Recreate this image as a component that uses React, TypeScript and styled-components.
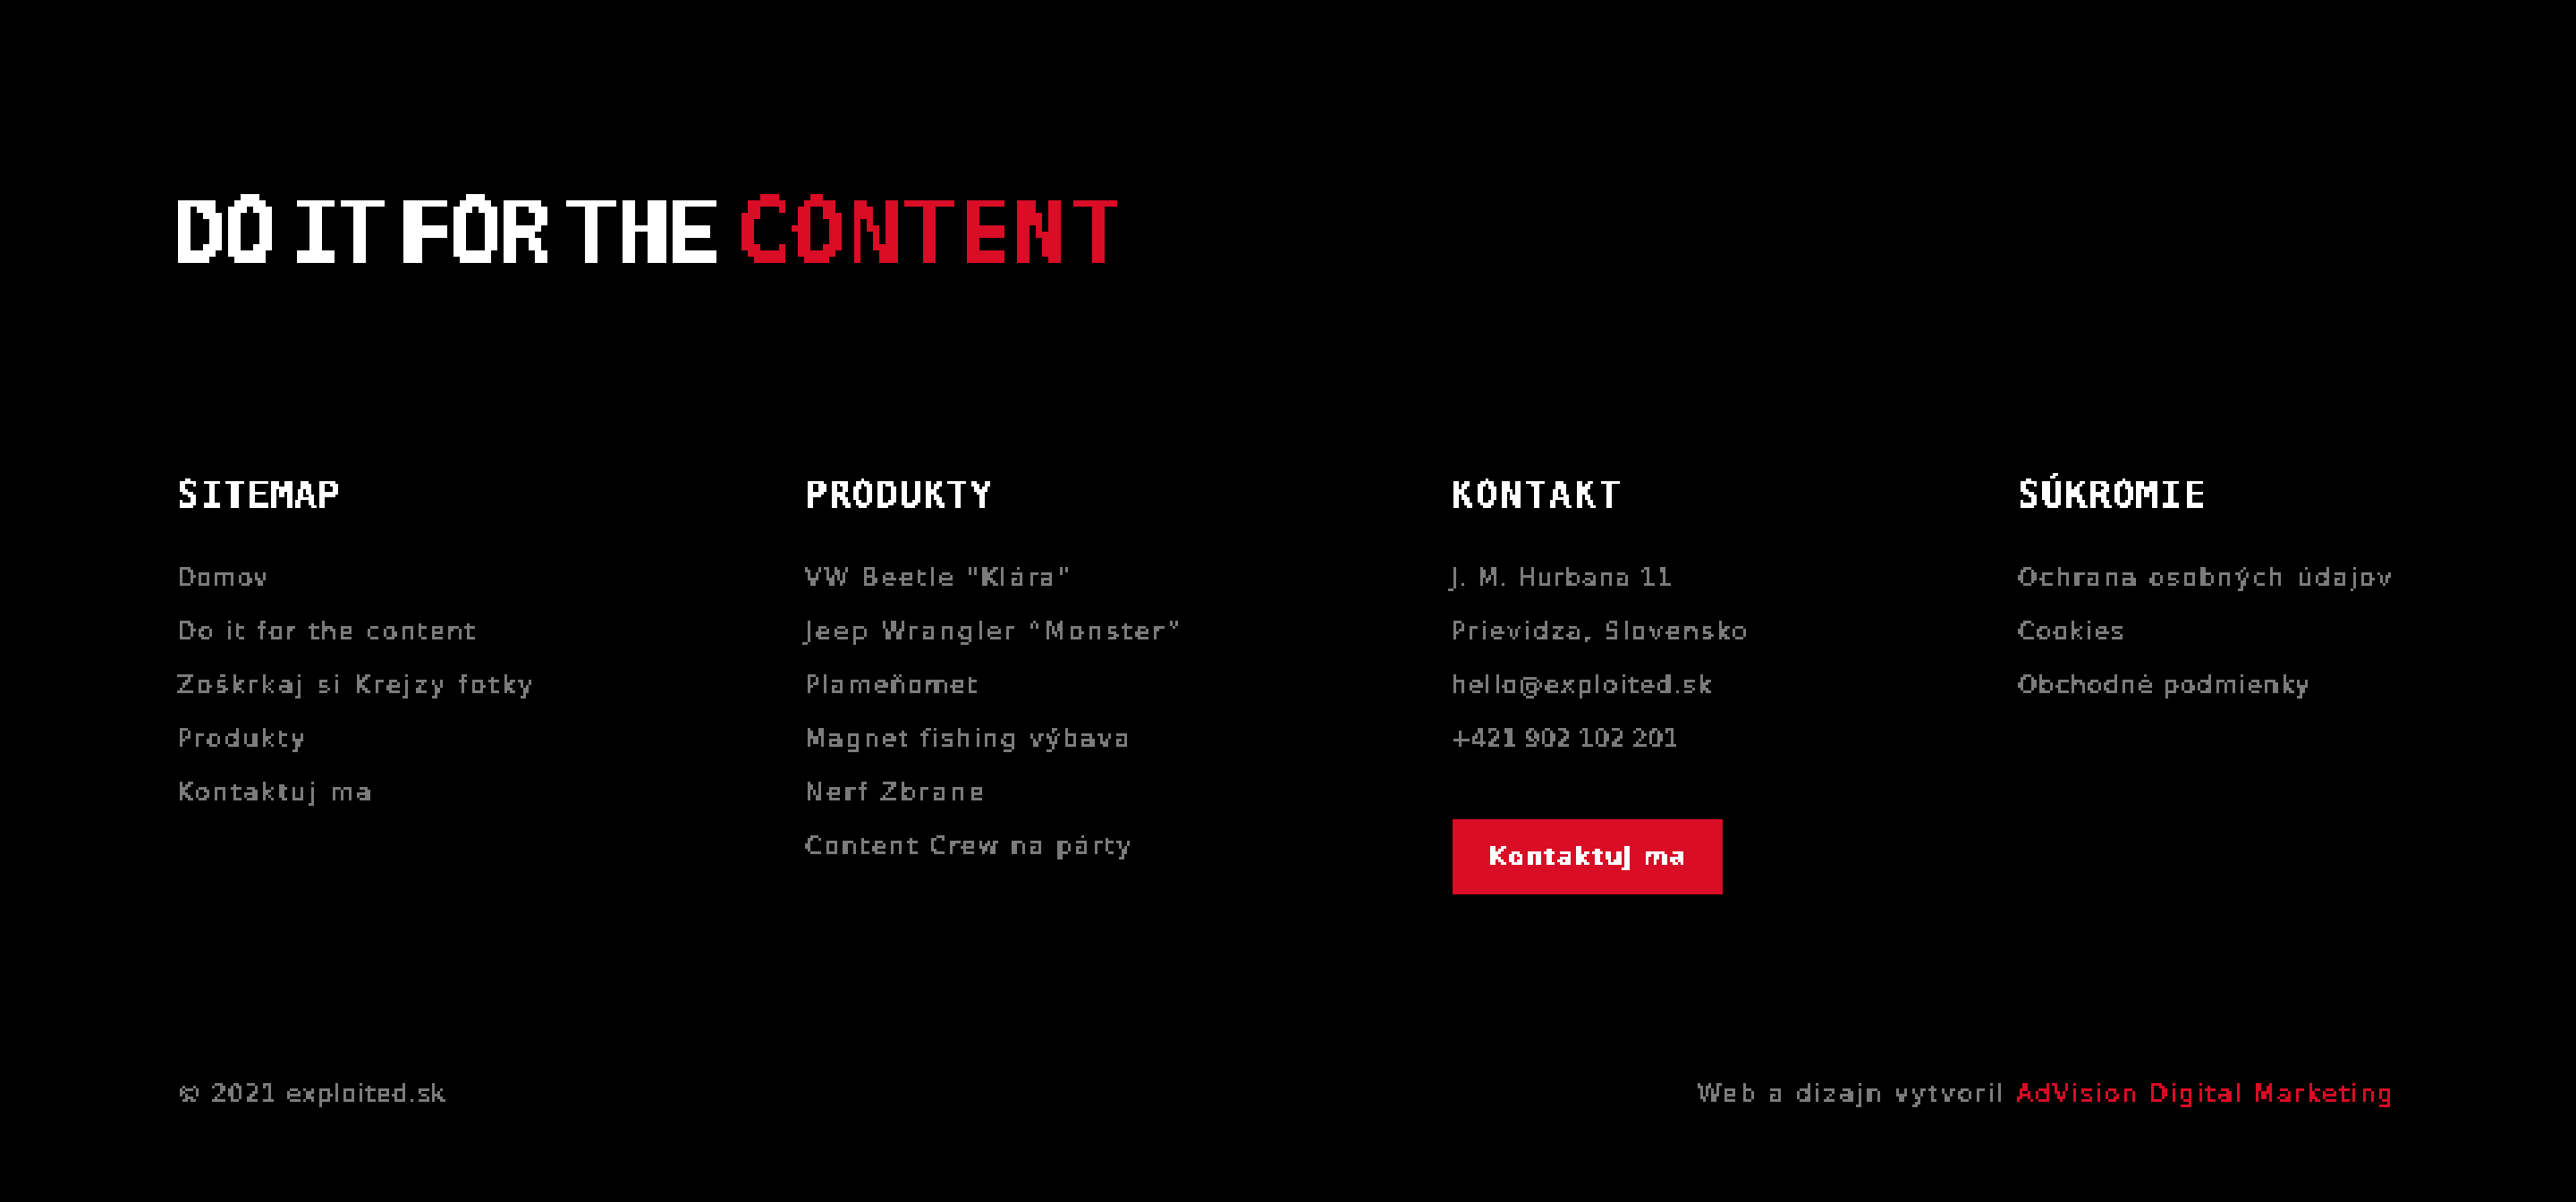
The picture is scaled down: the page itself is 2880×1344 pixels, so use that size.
// Dependencies
import React from 'react'
import styled, { createGlobalStyle } from 'styled-components'

// Data: label and its letter spacing, the pixel font in the original is not monospaced
type Line = [string, number]

const sitemap: Line[] = [
  ['Domov', 1.3],
  ['Do it for the content', 2.9],
  ['Zoškrkaj si Krejzy fotky', 3.7],
  ['Produkty', 3.4],
  ['Kontaktuj ma', 3.4],
]
const products: Line[] = [
  ['VW Beetle “Klára”', 3.2],
  ['Jeep Wrangler “Monster”', 3.75],
  ['Plameňomet', 2.4],
  ['Magnet fishing výbava', 2.8],
  ['Nerf Zbrane', 3.7],
  ['Content Crew na párty', 2.9],
]
const contact: Line[] = [
  ['J. M. Hurbana 11', 1.55],
  ['Prievidza, Slovensko', 2.9],
  ['hello@exploited.sk', 2.1],
  ['+421 902 102 201', 0],
]
const privacy: Line[] = [
  ['Ochrana osobných údajov', 3],
  ['Cookies', 2],
  ['Obchodné podmienky', 1.8],
]

const red = '#d90d25'
const grey = '#7c7c7c'

const Links = ({ lines }: { lines: Line[] }) => (
  <List>
    {lines.map(([label, track]) => (
      <Item key={label} $track={track}>
        {label}
      </Item>
    ))}
  </List>
)

// Page
export default function App() {
  return (
    <>
      <Global />
      <PixelFilters />
      <Footer>
        <Headline>
          DO <Tight>IT</Tight> FOR THE <Accent>CONTENT</Accent>
        </Headline>

        <Columns>
          <Column>
            <Title $track={1.5}>SITEMAP</Title>
            <Links lines={sitemap} />
          </Column>
          <Column>
            <Title $track={1.7}>PRODUKTY</Title>
            <Links lines={products} />
          </Column>
          <Column>
            <Title $track={2.8}>KONTAKT</Title>
            <Links lines={contact} />
            <Button>
              <ButtonLabel>Kontaktuj ma</ButtonLabel>
            </Button>
          </Column>
          <Column>
            <Title $track={1.7}>SÚKROMIE</Title>
            <Links lines={privacy} />
          </Column>
        </Columns>

        <Bottom>
          <Small $track={1.3}>© 2021 exploited.sk</Small>
          <Small $track={3}>
            Web a dizajn vytvoril <SmallAccent>AdVision Digital Marketing</SmallAccent>
          </Small>
        </Bottom>
      </Footer>
    </>
  )
}

// Blocky look for the text: sample on a grid, then grow each sample into a square
const Grid = ({ id, size }: { id: string; size: number }) => (
  <filter id={id} x="0" y="0" width="100%" height="100%" colorInterpolationFilters="sRGB">
    <feFlood x={Math.floor(size / 2)} y={Math.floor(size / 2)} width="1" height="1" floodColor="#000" />
    <feComposite width={size} height={size} />
    <feTile result="dots" />
    <feComposite in="SourceGraphic" in2="dots" operator="in" />
    <feComponentTransfer>
      <feFuncA type="discrete" tableValues="0 1 1" />
    </feComponentTransfer>
    <feMorphology operator="dilate" radius={Math.floor(size / 2)} />
  </filter>
)

const PixelFilters = () => (
  <HiddenSvg aria-hidden="true">
    <defs>
      <Grid id="px3" size={3} />
      <Grid id="px7" size={7} />
    </defs>
  </HiddenSvg>
)

// Styled Components
const Global = createGlobalStyle`
  html, body {
    margin: 0;
    background: #000;
  }
`

const HiddenSvg = styled.svg`
  position: absolute;
  width: 0;
  height: 0;
`

const Footer = styled.footer`
  box-sizing: border-box;
  display: flex;
  flex-direction: column;
  height: 1344px;
  padding: 210px 202px 0 198px;
  background: #000;
  font-family: 'DejaVu Sans', 'Liberation Sans', sans-serif;
`

const Headline = styled.h1`
  margin: 0 0 213px -6px;
  width: max-content;
  padding-right: 20px;
  font-family: 'DejaVu Sans Mono', monospace;
  font-size: 101px;
  line-height: 100px;
  font-weight: 700;
  letter-spacing: -4.8px;
  word-spacing: -37.5px;
  color: #fff;
  filter: url(#px7);
`

const Tight = styled.span`
  letter-spacing: -9px;
`

const Accent = styled.span`
  margin-left: 4px;
  color: ${red};
  letter-spacing: 1.4px;
`

const Columns = styled.div`
  display: grid;
  grid-template-columns: 702px 722px 634px auto;
  height: 670px;
  align-content: start;
`

const Column = styled.div`
  display: flex;
  flex-direction: column;
  align-items: flex-start;
`

const Title = styled.h3<{ $track: number }>`
  margin: 0 0 33px;
  padding-right: 6px;
  font-family: 'DejaVu Sans Mono', monospace;
  font-size: 41px;
  line-height: 60px;
  font-weight: 700;
  color: #fff;
  letter-spacing: ${(p) => p.$track}px;
  filter: url(#px3);
`

const List = styled.ul`
  margin: 0;
  padding: 0;
  list-style: none;
`

const Item = styled.li<{ $track: number }>`
  height: 60px;
  font-size: 27px;
  line-height: 60px;
  letter-spacing: ${(p) => p.$track}px;
  color: ${grey};
  white-space: nowrap;
  -webkit-text-stroke: 0.4px ${grey};
  filter: url(#px3);
`

const Button = styled.button`
  margin: 60px 0 0 2px;
  padding: 0;
  width: 302px;
  height: 84px;
  border: 0;
  background: ${red};
  font-family: inherit;
`

const ButtonLabel = styled.span`
  display: block;
  font-size: 27px;
  line-height: 60px;
  font-weight: 700;
  letter-spacing: 1.5px;
  color: #fff;
  filter: url(#px3);
`

const Bottom = styled.div`
  display: flex;
  justify-content: space-between;
`

const Small = styled.div<{ $track: number }>`
  font-size: 27px;
  line-height: 60px;
  letter-spacing: ${(p) => p.$track}px;
  color: ${grey};
  white-space: nowrap;
  -webkit-text-stroke: 0.4px ${grey};
  filter: url(#px3);
`

const SmallAccent = styled.span`
  color: ${red};
  letter-spacing: 2.63px;
  -webkit-text-stroke: 0.4px ${red};
`
